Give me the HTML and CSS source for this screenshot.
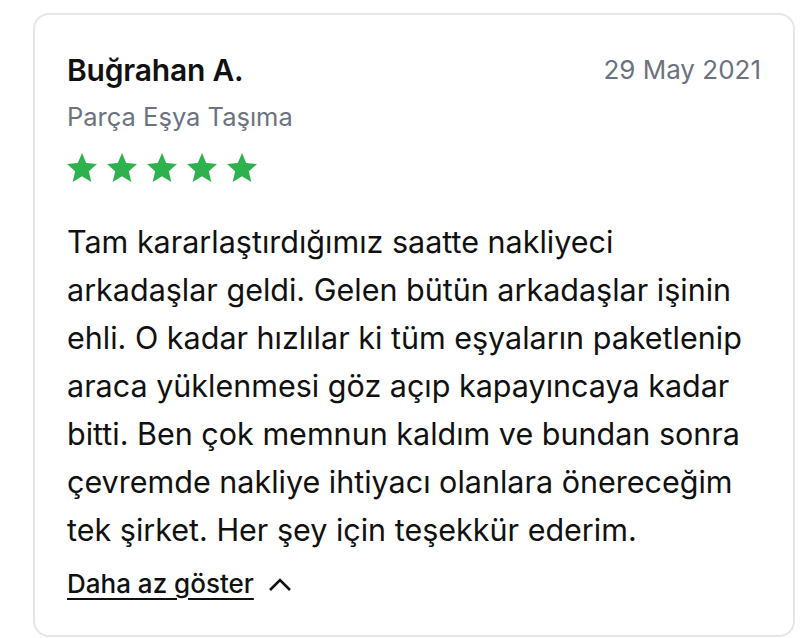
FILE: index.html
```html
<!DOCTYPE html>
<html lang="tr">
<head>
<meta charset="utf-8">
<link rel="stylesheet" href="styles.css">
</head>
<body>
<div class="card">
  <div class="head">
    <div class="who">
      <div class="name">Buğrahan A.</div>
      <div class="service">Parça Eşya Taşıma</div>
    </div>
    <div class="date">29 May 2021</div>
  </div>
  <div class="stars">
    <svg viewBox="2 2 20 19" preserveAspectRatio="none"><path d="M12 17.27L18.18 21l-1.64-7.03L22 9.24l-7.19-.61L12 2 9.19 8.63 2 9.24l5.46 4.73L5.82 21z"/></svg>
    <svg viewBox="2 2 20 19" preserveAspectRatio="none"><path d="M12 17.27L18.18 21l-1.64-7.03L22 9.24l-7.19-.61L12 2 9.19 8.63 2 9.24l5.46 4.73L5.82 21z"/></svg>
    <svg viewBox="2 2 20 19" preserveAspectRatio="none"><path d="M12 17.27L18.18 21l-1.64-7.03L22 9.24l-7.19-.61L12 2 9.19 8.63 2 9.24l5.46 4.73L5.82 21z"/></svg>
    <svg viewBox="2 2 20 19" preserveAspectRatio="none"><path d="M12 17.27L18.18 21l-1.64-7.03L22 9.24l-7.19-.61L12 2 9.19 8.63 2 9.24l5.46 4.73L5.82 21z"/></svg>
    <svg viewBox="2 2 20 19" preserveAspectRatio="none"><path d="M12 17.27L18.18 21l-1.64-7.03L22 9.24l-7.19-.61L12 2 9.19 8.63 2 9.24l5.46 4.73L5.82 21z"/></svg>
  </div>
  <p class="text">Tam kararlaştırdığımız saatte nakliyeci arkadaşlar geldi. Gelen bütün arkadaşlar işinin ehli. O kadar hızlılar ki tüm eşyaların paketlenip araca yüklenmesi göz açıp kapayıncaya kadar bitti. Ben çok memnun kaldım ve bundan sonra çevremde nakliye ihtiyacı olanlara önereceğim tek şirket. Her şey için teşekkür ederim.</p>
  <div class="toggle">
    <span class="toggle-label">Daha az göster</span>
    <svg class="chev" viewBox="0 0 24 16"><path d="M2 14L12 4l10 10"/></svg>
  </div>
</div>
</body>
</html>
```
FILE: styles.css
```css
html, body {
  margin: 0;
  padding: 0;
  background: #ffffff;
}
body {
  padding: 13px 5px 0 33px;
  height: 638px;
  box-sizing: border-box;
  overflow: hidden;
}
.card {
  box-sizing: border-box;
  height: 624px;
  border: 2px solid #e6e6e6;
  border-radius: 16px;
  padding: 37px 32px 0 32px;
  color: #111111;
}
.head {
  display: flex;
  justify-content: space-between;
  align-items: flex-start;
}
.name {
  font-family: "Inter", sans-serif;
  font-weight: 600;
  font-size: 30px;
  line-height: 36px;
  letter-spacing: -0.2px;
}
.service {
  font-family: "Inter", sans-serif;
  font-size: 25.5px;
  line-height: 34px;
  color: #6b7280;
  margin-top: 12px;
}
.date {
  font-family: "Inter", sans-serif;
  font-size: 26px;
  line-height: 36px;
  color: #6b7280;
}
.stars {
  display: flex;
  gap: 10px;
  margin-top: 19px;
}
.stars svg {
  width: 30px;
  height: 29px;
  fill: #2db24e;
}
.text {
  font-family: "Inter", sans-serif;
  font-size: 30.5px;
  line-height: 48px;
  margin: 36px 0 0 0;
  color: #111111;
}
.toggle {
  display: flex;
  align-items: center;
  gap: 14px;
  margin-top: 13px;
}
.toggle-label {
  font-family: "Inter", sans-serif;
  font-weight: 500;
  font-size: 26px;
  line-height: 34px;
  text-decoration: underline;
  text-underline-offset: 5px;
  text-decoration-thickness: 2px;
}
.chev {
  width: 24px;
  height: 16px;
  fill: none;
  stroke: #111111;
  stroke-width: 2.6;
}
```
